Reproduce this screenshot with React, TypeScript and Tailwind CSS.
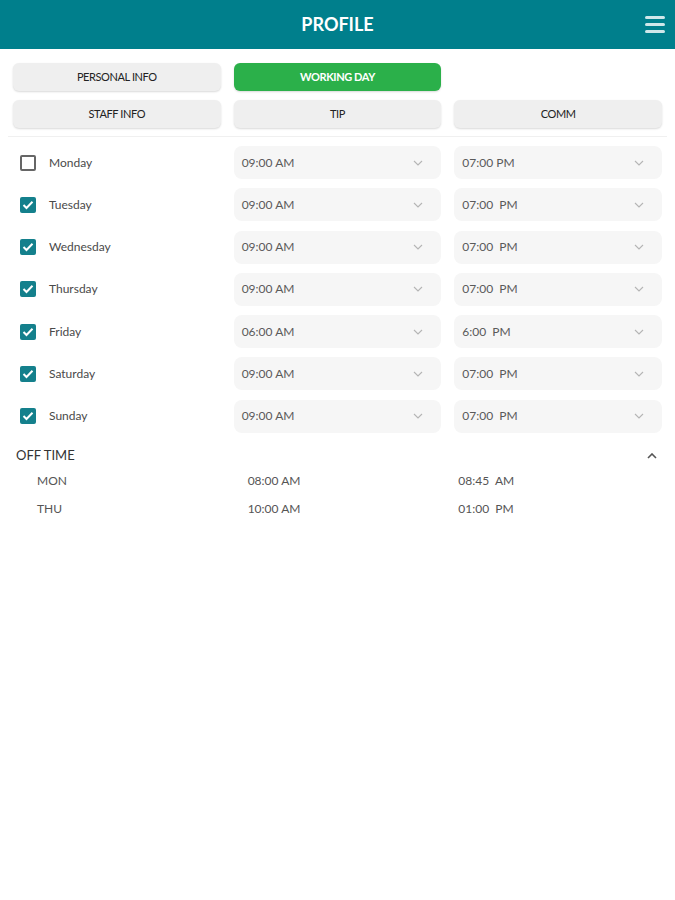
import React from "react";

const days = [
  { name: "Monday", checked: false, start: "09:00 AM", end: "07:00 PM" },
  { name: "Tuesday", checked: true, start: "09:00 AM", end: "07:00  PM" },
  { name: "Wednesday", checked: true, start: "09:00 AM", end: "07:00  PM" },
  { name: "Thursday", checked: true, start: "09:00 AM", end: "07:00  PM" },
  { name: "Friday", checked: true, start: "06:00 AM", end: "6:00  PM" },
  { name: "Saturday", checked: true, start: "09:00 AM", end: "07:00  PM" },
  { name: "Sunday", checked: true, start: "09:00 AM", end: "07:00  PM" },
];

function Chevron({ up = false }: { up?: boolean }) {
  return (
    <svg width="10" height="6" viewBox="0 0 10 6" className={up ? "rotate-180" : ""}>
      <path d="M1 1 L5 5 L9 1" fill="none" stroke={up ? "#555" : "#b5b5b5"} strokeWidth={up ? 1.6 : 1.1} />
    </svg>
  );
}

function Select({ value }: { value: string }) {
  return (
    <div className="flex h-[33px] items-center justify-between rounded-[8px] bg-[#f6f6f6] pl-[8px] pr-[18px]">
      <span className="whitespace-pre text-[12px] text-[#5a5a5a]">{value}</span>
      <Chevron />
    </div>
  );
}

function TabButton({ label, active = false }: { label: string; active?: boolean }) {
  return (
    <div
      className={
        active
          ? "flex items-center justify-center rounded-[6px] bg-[#2bb04a] text-[11px] font-bold tracking-[-0.4px] text-white shadow-[0_1px_2px_rgba(0,0,0,0.15)]"
          : "flex items-center justify-center rounded-[6px] bg-[#efefef] text-[11px] tracking-[-0.4px] text-[#222] shadow-[0_1px_2px_rgba(0,0,0,0.15)]"
      }
    >
      {label}
    </div>
  );
}

export default function App() {
  return (
    <div className="min-h-[900px] w-[675px] bg-white font-['Lato','Liberation_Sans',sans-serif]">
      <header className="relative flex h-[49px] items-center justify-center bg-[#007f8c]">
        <h1 className="text-[18px] font-bold text-white">PROFILE</h1>
        <div className="absolute right-[10px] top-[16px] flex flex-col gap-[4px]">
          <div className="h-[3px] w-[20px] rounded-full bg-[#cfe7ea]" />
          <div className="h-[3px] w-[20px] rounded-full bg-[#cfe7ea]" />
          <div className="h-[3px] w-[20px] rounded-full bg-[#cfe7ea]" />
        </div>
      </header>

      <div className="grid grid-cols-3 gap-x-[13px] gap-y-[9px] px-[13px] pt-[14px]">
        <div className="grid h-[28px]">
          <TabButton label="PERSONAL INFO" />
        </div>
        <div className="grid h-[28px]">
          <TabButton label="WORKING DAY" active />
        </div>
        <div />
        <div className="grid h-[28px]">
          <TabButton label="STAFF INFO" />
        </div>
        <div className="grid h-[28px]">
          <TabButton label="TIP" />
        </div>
        <div className="grid h-[28px]">
          <TabButton label="COMM" />
        </div>
      </div>

      <div className="mx-[8px] mt-[8px] h-px bg-[#f0f0f0]" />

      <div className="mt-[9px] flex flex-col gap-[9.3px] px-[13px]">
        {days.map((d) => (
          <div key={d.name} className="grid grid-cols-3 gap-x-[13px]">
            <div className="flex items-center pl-[7px]">
              {d.checked ? (
                <div className="flex h-[16px] w-[16px] items-center justify-center rounded-[2px] bg-[#14808c]">
                  <svg width="12" height="10" viewBox="0 0 12 10">
                    <path d="M1.5 5 L4.5 8 L10.5 1.8" fill="none" stroke="white" strokeWidth="2" />
                  </svg>
                </div>
              ) : (
                <div className="h-[16px] w-[16px] rounded-[2px] border-2 border-[#666]" />
              )}
              <span className="ml-[13px] text-[12px] text-[#4a4a4a]">{d.name}</span>
            </div>
            <Select value={d.start} />
            <Select value={d.end} />
          </div>
        ))}
      </div>

      <div className="mt-[13px] flex items-center justify-between pl-[16px] pr-[18px]">
        <span className="text-[13px] text-[#333]">OFF TIME</span>
        <Chevron up />
      </div>

      <div className="mt-[7px] flex flex-col gap-[10px] text-[12px] text-[#555]">
        {[
          ["MON", "08:00 AM", "08:45  AM"],
          ["THU", "10:00 AM", "01:00  PM"],
        ].map(([a, b, c]) => (
          <div key={a} className="grid grid-cols-3 gap-x-[13px] px-[13px]">
            <span className="pl-[24px]">{a}</span>
            <span className="pl-[14px]">{b}</span>
            <span className="whitespace-pre pl-[4px]">{c}</span>
          </div>
        ))}
      </div>
    </div>
  );
}
